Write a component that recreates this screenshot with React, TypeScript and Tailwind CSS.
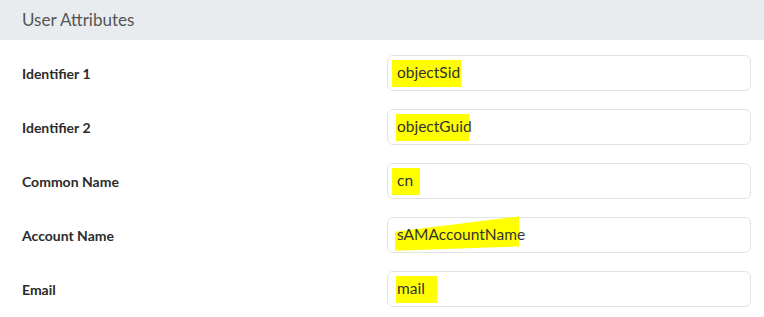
const rows = [
  { label: "Identifier 1", value: "objectSid", mark: "w-[69px] left-[-5px]" },
  { label: "Identifier 2", value: "objectGuid", mark: "w-[73px] left-[-1px]" },
  { label: "Common Name", value: "cn", mark: "w-[28px] left-[-5px]" },
  { label: "Account Name", value: "sAMAccountName", mark: "slant" },
  { label: "Email", value: "mail", mark: "w-[41px] left-[-1px]" },
];

export default function App() {
  return (
    <div className="h-[317px] w-[764px] bg-white font-['Lato',sans-serif]">
      <div className="flex h-10 items-center bg-[#e9ecef] px-[22px]">
        <h2 className="text-[17px] font-normal text-[#555]">User Attributes</h2>
      </div>

      <div className="flex flex-col gap-[18px] pt-[15px] pl-[22px] pr-[13px]">
        {rows.map((row) => (
          <div key={row.label} className="flex h-9 items-center">
            <span className="w-[365px] text-[14px] font-bold text-[#2b2b2b]">
              {row.label}
            </span>
            <div className="flex h-9 flex-1 items-center rounded-md border border-[#e3e3e3] pl-[9px]">
              <span className="relative text-[15.5px] text-[#333]">
                {row.mark === "slant" ? (
                  <span className="absolute top-[-7px] bottom-[-4px] left-[-2px] w-[124px] bg-[#ffff00] [clip-path:polygon(0_45%,100%_0,100%_88%,0_100%)]" />
                ) : (
                  <span
                    className={`absolute top-[-1px] bottom-[-2px] bg-[#ffff00] ${row.mark}`}
                  />
                )}
                <span className="relative">{row.value}</span>
              </span>
            </div>
          </div>
        ))}
      </div>
    </div>
  );
}
